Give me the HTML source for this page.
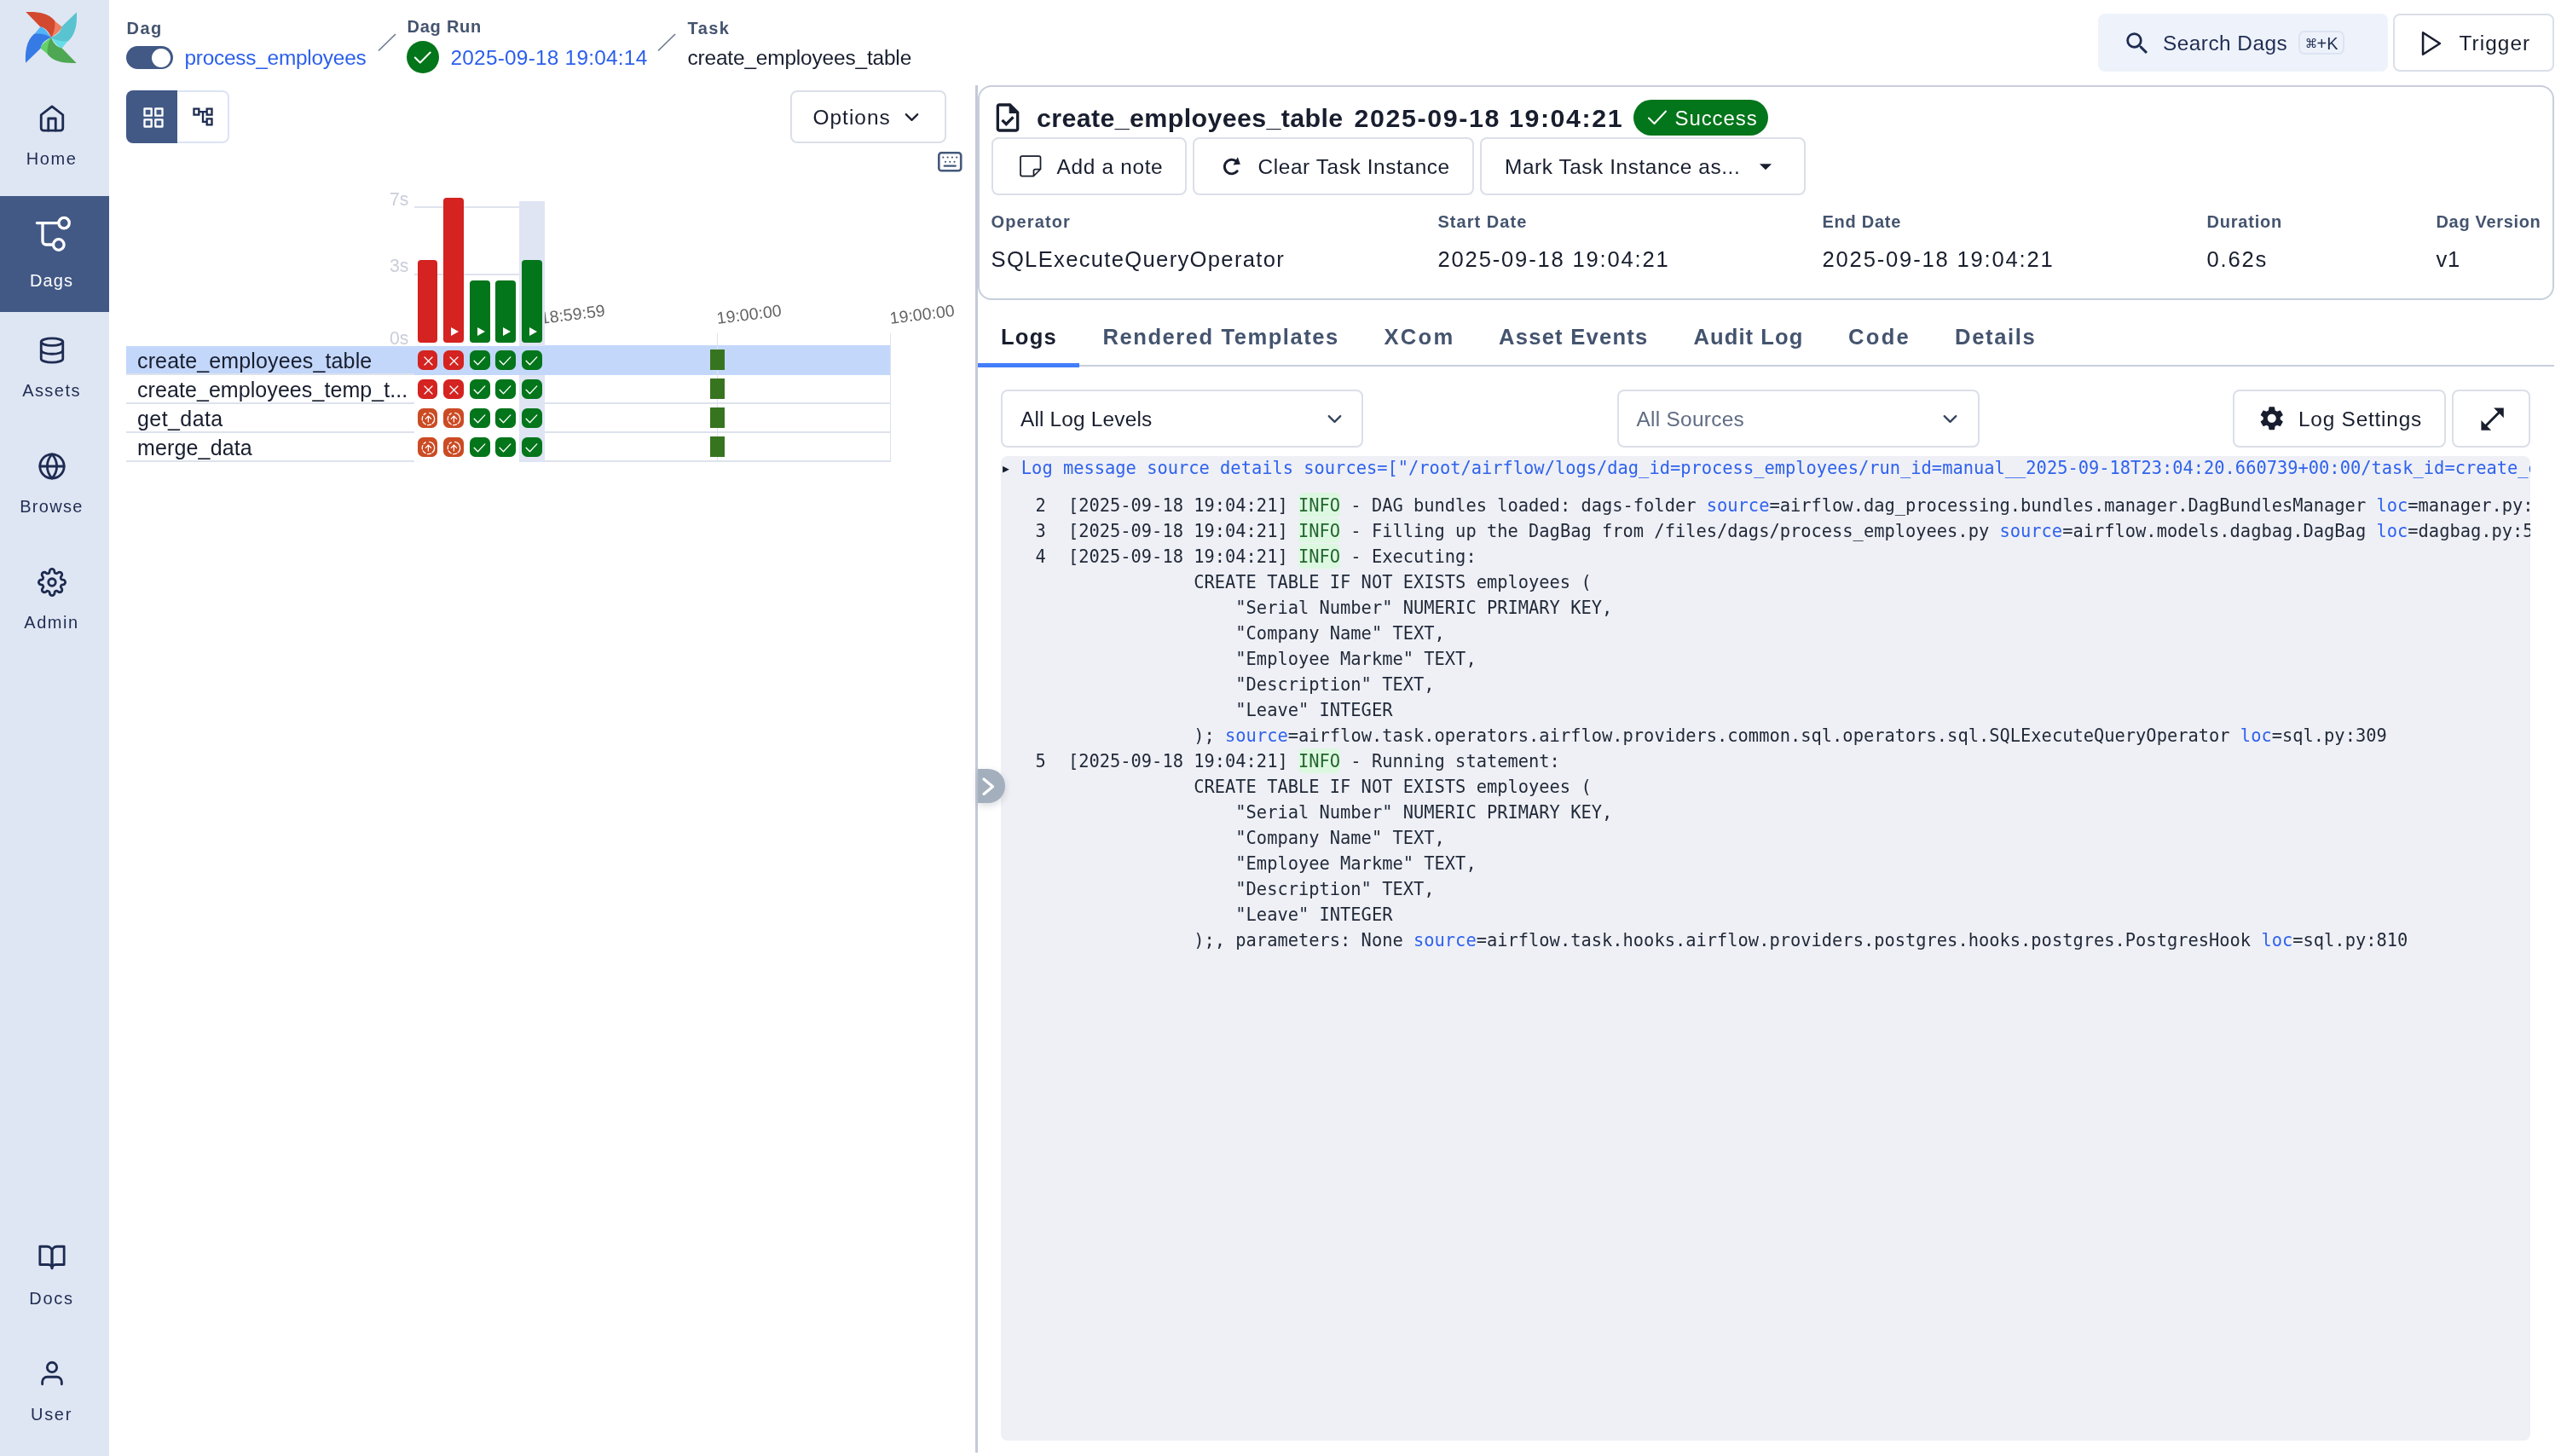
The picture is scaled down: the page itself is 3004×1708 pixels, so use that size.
<!DOCTYPE html>
<html lang="en">
<head>
<meta charset="utf-8">
<title>process_employees - create_employees_table - Airflow</title>
<style>
html,body{margin:0;padding:0;background:#fff}
body{width:3004px;height:1708px;position:relative;overflow:hidden;will-change:transform;font-family:"Liberation Sans", sans-serif;color:#181e2e}
.a{position:absolute;display:block;margin:0;padding:0}
a{text-decoration:none;color:inherit}
.t{position:absolute;display:block;white-space:pre;line-height:1;margin:0;padding:0;font-weight:400}
h2.t{font-weight:700}
svg{display:block;overflow:visible}
.mono{font-family:"DejaVu Sans Mono", "Liberation Mono", monospace;font-size:20.4px;color:#1f2838}
pre.mono{white-space:pre}
.ln{position:absolute;left:0;height:30px;line-height:30px;white-space:pre;width:3000px}
.ln i{position:absolute;left:0;width:52.7px;text-align:right;font-style:normal}
.ln>span{position:absolute;left:78.90px}
.ln b{font-weight:400;color:#2f62ee}
.ln mark{background:#ddf8e1;color:#23662f;border-radius:5px;padding:3px 0 2px}
summary::-webkit-details-marker{display:none}
@media (max-width:1700px){html{zoom:.5}}
</style>
</head>
<body>
<nav class="a" style="left:0;top:0;width:128px;height:1708px;background:#dfe6f3">
<svg class="a" style="left:27.60px;top:12.20px;" width="64.00" height="64.00" viewBox="-32 -32 64 64"><g transform="rotate(0)"><path fill="#ee8061" d="M3-20.6 12.4-12.7C12.6-9 6-4 0 0L-1-3Z"/><path fill="#d2492f" d="M-29.7-29.9C-18-30.6-4-29.5 4-20.1 5.2-15 4-6 0 0-2-5-6-11.6-12.7-12.4Z"/></g><g transform="rotate(90)"><path fill="#66dee8" d="M3-20.6 12.4-12.7C12.6-9 6-4 0 0L-1-3Z"/><path fill="#5ac3d0" d="M-29.7-29.9C-18-30.6-4-29.5 4-20.1 5.2-15 4-6 0 0-2-5-6-11.6-12.7-12.4Z"/></g><g transform="rotate(180)"><path fill="#64d269" d="M3-20.6 12.4-12.7C12.6-9 6-4 0 0L-1-3Z"/><path fill="#4ea853" d="M-29.7-29.9C-18-30.6-4-29.5 4-20.1 5.2-15 4-6 0 0-2-5-6-11.6-12.7-12.4Z"/></g><g transform="rotate(270)"><path fill="#52b4f8" d="M3-20.6 12.4-12.7C12.6-9 6-4 0 0L-1-3Z"/><path fill="#367ae6" d="M-29.7-29.9C-18-30.6-4-29.5 4-20.1 5.2-15 4-6 0 0-2-5-6-11.6-12.7-12.4Z"/></g></svg>
<a class="a" style="left:0.00px;top:94.00px;width:128.00px;height:136.00px;background:transparent;"><svg class="a" style="left:44.00px;top:28.00px;" width="34.00" height="34.00" viewBox="0 0 24 24"><g fill="none" stroke="#1e2c52" stroke-width="2" stroke-linecap="round" stroke-linejoin="round"><path d="M3 9l9-7 9 7v11a2 2 0 0 1-2 2H5a2 2 0 0 1-2-2z"/><polyline points="9 22 9 12 15 12 15 22"/></g></svg><span id="t1" class="t" style="top:81.60px;font-size:20.00px;left:60.50px;transform:translateX(-50%);color:#1e2c52;letter-spacing:1.580px;margin-right:-1.580px;">Home</span></a>
<a class="a" style="left:0.00px;top:230.00px;width:128.00px;height:136.00px;background:#425986;"><svg class="a" style="left:0.00px;top:0.00px;" width="128.00" height="136.00" viewBox="0 0 128 136"><g fill="none" stroke="#fff" stroke-width="3.3" stroke-linecap="round"><path d="M43.4 31.6H67.2M50 31.6V53a4 4 0 0 0 4 4h6.6"/><circle cx="75.1" cy="31.6" r="6.2"/><circle cx="68.8" cy="57" r="6.3"/></g></svg><span id="t2" class="t" style="top:89.00px;font-size:20.00px;left:60.50px;transform:translateX(-50%);color:#ffffff;letter-spacing:1.099px;margin-right:-1.099px;">Dags</span></a>
<a class="a" style="left:0.00px;top:366.00px;width:128.00px;height:136.00px;background:transparent;"><svg class="a" style="left:44.00px;top:28.00px;" width="34.00" height="34.00" viewBox="0 0 24 24"><g fill="none" stroke="#1e2c52" stroke-width="2" stroke-linecap="round" stroke-linejoin="round"><ellipse cx="12" cy="5" rx="9" ry="3"/><path d="M21 12c0 1.66-4 3-9 3s-9-1.34-9-3"/><path d="M3 5v14c0 1.66 4 3 9 3s9-1.34 9-3V5"/></g></svg><span id="t3" class="t" style="top:81.60px;font-size:20.00px;left:60.50px;transform:translateX(-50%);color:#1e2c52;letter-spacing:1.454px;margin-right:-1.454px;">Assets</span></a>
<a class="a" style="left:0.00px;top:502.00px;width:128.00px;height:136.00px;background:transparent;"><svg class="a" style="left:44.00px;top:28.00px;" width="34.00" height="34.00" viewBox="0 0 24 24"><g fill="none" stroke="#1e2c52" stroke-width="2" stroke-linecap="round" stroke-linejoin="round"><circle cx="12" cy="12" r="10"/><line x1="2" y1="12" x2="22" y2="12"/><path d="M12 2a15.3 15.3 0 0 1 4 10 15.3 15.3 0 0 1-4 10 15.3 15.3 0 0 1-4-10 15.3 15.3 0 0 1 4-10z"/></g></svg><span id="t4" class="t" style="top:81.60px;font-size:20.00px;left:60.50px;transform:translateX(-50%);color:#1e2c52;letter-spacing:1.319px;margin-right:-1.319px;">Browse</span></a>
<a class="a" style="left:0.00px;top:638.00px;width:128.00px;height:136.00px;background:transparent;"><svg class="a" style="left:44.00px;top:28.00px;" width="34.00" height="34.00" viewBox="0 0 24 24"><g fill="none" stroke="#1e2c52" stroke-width="2" stroke-linecap="round" stroke-linejoin="round"><circle cx="12" cy="12" r="3"/><path d="M19.4 15a1.65 1.65 0 0 0 .33 1.82l.06.06a2 2 0 0 1 0 2.83 2 2 0 0 1-2.83 0l-.06-.06a1.65 1.65 0 0 0-1.82-.33 1.65 1.65 0 0 0-1 1.51V21a2 2 0 0 1-2 2 2 2 0 0 1-2-2v-.09A1.65 1.65 0 0 0 9 19.4a1.65 1.65 0 0 0-1.82.33l-.06.06a2 2 0 0 1-2.83 0 2 2 0 0 1 0-2.83l.06-.06a1.65 1.65 0 0 0 .33-1.82 1.65 1.65 0 0 0-1.51-1H3a2 2 0 0 1-2-2 2 2 0 0 1 2-2h.09A1.65 1.65 0 0 0 4.6 9a1.65 1.65 0 0 0-.33-1.82l-.06-.06a2 2 0 0 1 0-2.83 2 2 0 0 1 2.83 0l.06.06a1.65 1.65 0 0 0 1.82.33H9a1.65 1.65 0 0 0 1-1.51V3a2 2 0 0 1 2-2 2 2 0 0 1 2 2v.09a1.65 1.65 0 0 0 1 1.51 1.65 1.65 0 0 0 1.82-.33l.06-.06a2 2 0 0 1 2.83 0 2 2 0 0 1 0 2.83l-.06.06a1.65 1.65 0 0 0-.33 1.82V9a1.65 1.65 0 0 0 1.51 1H21a2 2 0 0 1 2 2 2 2 0 0 1-2 2h-.09a1.65 1.65 0 0 0-1.51 1z"/></g></svg><span id="t5" class="t" style="top:81.60px;font-size:20.00px;left:60.50px;transform:translateX(-50%);color:#1e2c52;letter-spacing:1.524px;margin-right:-1.524px;">Admin</span></a>
<a class="a" style="left:0.00px;top:1431.00px;width:128.00px;height:136.00px;background:transparent;"><svg class="a" style="left:44.00px;top:27.00px;" width="34.00" height="34.00" viewBox="0 0 24 24"><g fill="none" stroke="#1e2c52" stroke-width="2" stroke-linecap="round" stroke-linejoin="round"><path d="M2 3h6a4 4 0 0 1 4 4v14a3 3 0 0 0-3-3H2z"/><path d="M22 3h-6a4 4 0 0 0-4 4v14a3 3 0 0 1 3-3h7z"/></g></svg><span id="t6" class="t" style="top:81.60px;font-size:20.00px;left:60.50px;transform:translateX(-50%);color:#1e2c52;letter-spacing:1.774px;margin-right:-1.774px;">Docs</span></a>
<a class="a" style="left:0.00px;top:1567.00px;width:128.00px;height:136.00px;background:transparent;"><svg class="a" style="left:44.00px;top:27.00px;" width="34.00" height="34.00" viewBox="0 0 24 24"><g fill="none" stroke="#1e2c52" stroke-width="2" stroke-linecap="round" stroke-linejoin="round"><path d="M20 21v-2a4 4 0 0 0-4-4H8a4 4 0 0 0-4 4v2"/><circle cx="12" cy="7" r="4"/></g></svg><span id="t7" class="t" style="top:81.60px;font-size:20.00px;left:60.50px;transform:translateX(-50%);color:#1e2c52;letter-spacing:1.689px;margin-right:-1.689px;">User</span></a>
</nav>
<header class="a" style="left:128px;top:0;width:2876px;height:100px">
</header>
<span id="t8" class="t" style="top:23.00px;font-size:20.00px;left:148.50px;color:#44546f;font-weight:700;letter-spacing:1.502px;margin-right:-1.502px;">Dag</span>
<div class="a" style="left:148.00px;top:54.00px;width:55.00px;height:27.00px;background:#425986;border-radius:14px;"><i class="a" style="left:29.8px;top:2.5px;width:22px;height:22px;border-radius:50%;background:#fff"></i></div>
<a id="t9" class="t" style="top:55.70px;font-size:24.40px;left:216.50px;color:#2b5fec;letter-spacing:-0.233px;margin-right:0.233px;">process_employees</a>
<svg class="a" style="left:442.50px;top:38.50px;" width="22.00" height="21.50" viewBox="0 0 22 21.5"><path d="M1 20.5 21 1" stroke="#6a788c" stroke-width="1.6" fill="none"/></svg>
<span id="t10" class="t" style="top:21.00px;font-size:20.00px;left:477.50px;color:#44546f;font-weight:700;letter-spacing:0.764px;margin-right:-0.764px;">Dag Run</span>
<svg class="a" style="left:477.00px;top:48.00px;" width="38.00" height="38.00" viewBox="0 0 38 38"><circle cx="19" cy="19" r="19" fill="#03751a"/><polyline points="9.8 19.5 15.85 25.5 27.7 13.5" fill="none" stroke="#fff" stroke-width="2" stroke-linecap="round" stroke-linejoin="round"/></svg>
<a id="t11" class="t" style="top:55.70px;font-size:24.40px;left:528.50px;color:#2b5fec;letter-spacing:0.234px;margin-right:-0.234px;">2025-09-18 19:04:14</a>
<svg class="a" style="left:770.50px;top:38.50px;" width="22.00" height="21.50" viewBox="0 0 22 21.5"><path d="M1 20.5 21 1" stroke="#6a788c" stroke-width="1.6" fill="none"/></svg>
<span id="t12" class="t" style="top:23.00px;font-size:20.00px;left:806.50px;color:#44546f;font-weight:700;letter-spacing:1.397px;margin-right:-1.397px;">Task</span>
<span id="t13" class="t" style="top:55.70px;font-size:24.40px;left:806.50px;color:#181e2e;letter-spacing:-0.146px;margin-right:0.146px;">create_employees_table</span>
<div class="a" style="left:2461.00px;top:16.00px;width:340.00px;height:68.00px;background:#eef2fa;border-radius:8px;"></div>
<svg class="a" style="left:2490.00px;top:34.00px;" width="34.00" height="34.00" viewBox="0 0 24 24"><path fill="#1e2c52" d="M15.5 14h-.79l-.28-.27A6.471 6.471 0 0 0 16 9.5 6.5 6.5 0 1 0 9.5 16c1.61 0 3.09-.59 4.23-1.57l.27.28v.79l5 4.99L20.49 19l-4.99-5zm-6 0C7.01 14 5 11.99 5 9.5S7.01 5 9.5 5 14 7.01 14 9.5 11.99 14 9.5 14z"/></svg>
<span id="t14" class="t" style="top:39.00px;font-size:24.40px;left:2537.00px;color:#1e2c52;letter-spacing:0.470px;margin-right:-0.470px;">Search Dags</span>
<div class="a" style="left:2696.00px;top:36.00px;width:53.50px;height:28.00px;box-sizing:border-box;border:2px solid #dce4f3;border-radius:7px;background:#edf1fa;"></div>
<span id="t15" class="t" style="top:40.50px;font-size:20.00px;left:2703.80px;color:#1e2c52;"><span style="font-family:'DejaVu Sans',sans-serif;font-size:14.6px;position:relative;top:-1.5px;margin-right:-0.8px">⌘</span>+K</span>
<div class="a" style="left:2807.00px;top:16.00px;width:189.00px;height:68.00px;box-sizing:border-box;border:2px solid #dadfe8;border-radius:8px;"></div>
<svg class="a" style="left:2834.50px;top:34.00px;" width="34.00" height="34.00" viewBox="0 0 24 24"><g fill="none" stroke="#181e2e" stroke-width="1.8" stroke-linecap="round" stroke-linejoin="round"><polygon points="5 3 19 12 5 21 5 3"/></g></svg>
<span id="t16" class="t" style="top:39.00px;font-size:24.40px;left:2884.50px;color:#181e2e;letter-spacing:1.056px;margin-right:-1.056px;">Trigger</span>
<div class="a" style="left:148.00px;top:106.00px;width:60.00px;height:62.00px;background:#425986;border-radius:8px 0 0 8px;"></div>
<svg class="a" style="left:165.60px;top:123.50px;" width="28.00" height="28.00" viewBox="0 0 24 24"><g fill="none" stroke="#fff" stroke-width="2" stroke-linecap="round" stroke-linejoin="round"><rect x="3" y="3" width="7" height="7"/><rect x="14" y="3" width="7" height="7"/><rect x="14" y="14" width="7" height="7"/><rect x="3" y="14" width="7" height="7"/></g></svg>
<div class="a" style="left:208.00px;top:106.00px;width:61.00px;height:62.00px;box-sizing:border-box;border:2px solid #dbe4f4;border-left:0;border-radius:0 8px 8px 0;"></div>
<svg class="a" style="left:223.50px;top:123.40px;" width="28.00" height="28.00" viewBox="0 0 24 24"><path fill="#1e2c52" d="M22 11V3h-7v3H9V3H2v8h7V8h2v10h4v3h7v-8h-7v3h-2V8h2v3h7zM7 9H4V5h3v4zm10 6h3v4h-3v-4zm0-10h3v4h-3V5z"/></svg>
<div class="a" style="left:927.00px;top:106.00px;width:183.00px;height:62.00px;box-sizing:border-box;border:2px solid #dadfe8;border-radius:8px;"></div>
<span id="t17" class="t" style="top:125.80px;font-size:24.40px;left:953.50px;color:#181e2e;letter-spacing:1.022px;margin-right:-1.022px;">Options</span>
<svg class="a" style="left:1056.25px;top:123.90px;" width="27.00" height="27.00" viewBox="0 0 24 24"><g fill="none" stroke="#181e2e" stroke-width="1.9" stroke-linecap="round" stroke-linejoin="round"><polyline points="6 9 12 15 18 9"/></g></svg>
<svg class="a" style="left:1099.50px;top:178.00px;" width="28.50" height="23.50" viewBox="0 0 28.5 23.5"><rect x="1.3" y="1.3" width="25.9" height="20.9" rx="3" fill="none" stroke="#44597b" stroke-width="2.6"/><g fill="#44597b"><circle cx="6.3" cy="6.6" r="1.1"/><circle cx="11.6" cy="6.6" r="1.1"/><circle cx="16.9" cy="6.6" r="1.1"/><circle cx="22.2" cy="6.6" r="1.1"/><circle cx="9" cy="11.8" r="1.1"/><circle cx="14.25" cy="11.8" r="1.1"/><circle cx="19.5" cy="11.8" r="1.1"/><rect x="6.6" y="15.6" width="15.3" height="2.2" rx="1.1"/></g></svg>
<span id="t18" class="t" style="top:222.90px;font-size:21.20px;left:479.30px;transform:translateX(-100%);color:#c9ceda;">7s</span>
<span id="t19" class="t" style="top:300.60px;font-size:21.20px;left:479.30px;transform:translateX(-100%);color:#c9ceda;">3s</span>
<span id="t20" class="t" style="top:385.60px;font-size:21.20px;left:479.30px;transform:translateX(-100%);color:#c9ceda;">0s</span>
<div class="a" style="left:486.00px;top:241.50px;width:123.00px;height:2.00px;background:#dfe3ed;"></div>
<div class="a" style="left:486.00px;top:320.50px;width:123.00px;height:2.00px;background:#dfe3ed;"></div>
<div class="a" style="left:609.00px;top:236.00px;width:30.00px;height:305.50px;background:#dfe5f3;"></div>
<div class="a" style="left:490.00px;top:305.00px;width:23.00px;height:97.00px;background:#d42320;border-radius:4px;"></div>
<div class="a" style="left:520.00px;top:232.00px;width:24.00px;height:170.00px;background:#d42320;border-radius:4px;"><svg class="a" style="left:8.5px;bottom:8px" width="9" height="10" viewBox="0 0 9 10"><path fill="#fff" d="M0 0 9 5 0 10Z"/></svg></div>
<div class="a" style="left:551.00px;top:329.00px;width:24.00px;height:73.00px;background:#03751a;border-radius:4px;"><svg class="a" style="left:8.5px;bottom:8px" width="9" height="10" viewBox="0 0 9 10"><path fill="#fff" d="M0 0 9 5 0 10Z"/></svg></div>
<div class="a" style="left:581.00px;top:329.00px;width:24.00px;height:73.00px;background:#03751a;border-radius:4px;"><svg class="a" style="left:8.5px;bottom:8px" width="9" height="10" viewBox="0 0 9 10"><path fill="#fff" d="M0 0 9 5 0 10Z"/></svg></div>
<div class="a" style="left:612.00px;top:305.00px;width:24.00px;height:97.00px;background:#03751a;border-radius:4px;"><svg class="a" style="left:8.5px;bottom:8px" width="9" height="10" viewBox="0 0 9 10"><path fill="#fff" d="M0 0 9 5 0 10Z"/></svg></div>
<div class="a" style="left:148.00px;top:406.00px;width:338.00px;height:32.00px;background:#c3d7fb;"></div>
<div class="a" style="left:486.00px;top:406.00px;width:153.00px;height:34.00px;background:#c3d7fb;"></div>
<div class="a" style="left:639.00px;top:405.00px;width:406.00px;height:35.00px;background:#c3d7fb;"></div>
<div class="a" style="left:148.00px;top:438.00px;width:338.00px;height:2.00px;background:#dde2ec;"></div>
<div class="a" style="left:148.00px;top:472.00px;width:338.00px;height:2.00px;background:#dde2ec;"></div>
<div class="a" style="left:639.00px;top:472.00px;width:406.00px;height:2.00px;background:#dde2ec;"></div>
<div class="a" style="left:148.00px;top:506.00px;width:338.00px;height:2.00px;background:#dde2ec;"></div>
<div class="a" style="left:639.00px;top:506.00px;width:406.00px;height:2.00px;background:#dde2ec;"></div>
<div class="a" style="left:148.00px;top:540.00px;width:338.00px;height:2.00px;background:#dde2ec;"></div>
<div class="a" style="left:639.00px;top:540.00px;width:406.00px;height:2.00px;background:#dde2ec;"></div>
<div class="a" style="left:840.80px;top:391.00px;width:1.60px;height:150.00px;background:#dde2ec;"></div>
<div class="a" style="left:1043.80px;top:391.00px;width:1.60px;height:150.00px;background:#dde2ec;"></div>
<svg width="0" height="0" style="position:absolute"><defs><symbol id="i-x" viewBox="0 0 24 24"><path d="M8 8 17 17M17 8 8 17" stroke="#fff" stroke-width="1.3" stroke-linecap="round" fill="none"/></symbol><symbol id="i-ok" viewBox="0 0 24 24"><polyline points="5.15 12.3 9.5 16.7 17.8 7.9" stroke="#fff" stroke-width="1.35" stroke-linecap="round" stroke-linejoin="round" fill="none"/></symbol><symbol id="i-up" viewBox="0 0 24 24"><g stroke="#fff" stroke-width="1.25" fill="none" stroke-linecap="round"><path d="M13.65 5.31A7.2 7.2 0 0 1 17.03 17.92"/><path d="M15.6 18.85A7.2 7.2 0 0 1 9.3 5.9" stroke-dasharray="4.2 2.3"/><path d="M12.4 15.9V9.2M9.2 12.4 12.4 9.1 15.6 12.4"/></g></symbol></defs></svg>
<span id="t21" class="t" style="top:410.50px;font-size:25.00px;left:161.00px;color:#181e2e;letter-spacing:0.135px;margin-right:-0.135px;">create_employees_table</span>
<div class="a" style="left:490.00px;top:411.00px;width:23.00px;height:23.00px;background:#d42320;border-radius:6.5px;"><svg width="24" height="24"><use href="#i-x" width="24" height="24"/></svg></div>
<div class="a" style="left:520.00px;top:411.00px;width:24.00px;height:23.00px;background:#d42320;border-radius:6.5px;"><svg width="24" height="24"><use href="#i-x" width="24" height="24"/></svg></div>
<div class="a" style="left:551.00px;top:411.00px;width:24.00px;height:23.00px;background:#03751a;border-radius:6.5px;"><svg width="24" height="24"><use href="#i-ok" width="24" height="24"/></svg></div>
<div class="a" style="left:581.00px;top:411.00px;width:24.00px;height:23.00px;background:#03751a;border-radius:6.5px;"><svg width="24" height="24"><use href="#i-ok" width="24" height="24"/></svg></div>
<div class="a" style="left:612.00px;top:411.00px;width:24.00px;height:23.00px;background:#03751a;border-radius:6.5px;"><svg width="24" height="24"><use href="#i-ok" width="24" height="24"/></svg></div>
<div class="a" style="left:833.00px;top:409.80px;width:17.00px;height:24.40px;background:#37741f;"></div>
<span id="t22" class="t" style="top:444.50px;font-size:25.00px;left:161.00px;color:#181e2e;letter-spacing:0.071px;margin-right:-0.071px;">create_employees_temp_t...</span>
<div class="a" style="left:490.00px;top:445.00px;width:23.00px;height:23.00px;background:#d42320;border-radius:6.5px;"><svg width="24" height="24"><use href="#i-x" width="24" height="24"/></svg></div>
<div class="a" style="left:520.00px;top:445.00px;width:24.00px;height:23.00px;background:#d42320;border-radius:6.5px;"><svg width="24" height="24"><use href="#i-x" width="24" height="24"/></svg></div>
<div class="a" style="left:551.00px;top:445.00px;width:24.00px;height:23.00px;background:#03751a;border-radius:6.5px;"><svg width="24" height="24"><use href="#i-ok" width="24" height="24"/></svg></div>
<div class="a" style="left:581.00px;top:445.00px;width:24.00px;height:23.00px;background:#03751a;border-radius:6.5px;"><svg width="24" height="24"><use href="#i-ok" width="24" height="24"/></svg></div>
<div class="a" style="left:612.00px;top:445.00px;width:24.00px;height:23.00px;background:#03751a;border-radius:6.5px;"><svg width="24" height="24"><use href="#i-ok" width="24" height="24"/></svg></div>
<div class="a" style="left:833.00px;top:443.80px;width:17.00px;height:24.40px;background:#37741f;"></div>
<span id="t23" class="t" style="top:478.50px;font-size:25.00px;left:161.00px;color:#181e2e;letter-spacing:0.417px;margin-right:-0.417px;">get_data</span>
<div class="a" style="left:490.00px;top:479.00px;width:23.00px;height:23.00px;background:#cb4b23;border-radius:6.5px;"><svg width="24" height="24"><use href="#i-up" width="24" height="24"/></svg></div>
<div class="a" style="left:520.00px;top:479.00px;width:24.00px;height:23.00px;background:#cb4b23;border-radius:6.5px;"><svg width="24" height="24"><use href="#i-up" width="24" height="24"/></svg></div>
<div class="a" style="left:551.00px;top:479.00px;width:24.00px;height:23.00px;background:#03751a;border-radius:6.5px;"><svg width="24" height="24"><use href="#i-ok" width="24" height="24"/></svg></div>
<div class="a" style="left:581.00px;top:479.00px;width:24.00px;height:23.00px;background:#03751a;border-radius:6.5px;"><svg width="24" height="24"><use href="#i-ok" width="24" height="24"/></svg></div>
<div class="a" style="left:612.00px;top:479.00px;width:24.00px;height:23.00px;background:#03751a;border-radius:6.5px;"><svg width="24" height="24"><use href="#i-ok" width="24" height="24"/></svg></div>
<div class="a" style="left:833.00px;top:477.80px;width:17.00px;height:24.40px;background:#37741f;"></div>
<span id="t24" class="t" style="top:512.50px;font-size:25.00px;left:161.00px;color:#181e2e;letter-spacing:0.146px;margin-right:-0.146px;">merge_data</span>
<div class="a" style="left:490.00px;top:513.00px;width:23.00px;height:23.00px;background:#cb4b23;border-radius:6.5px;"><svg width="24" height="24"><use href="#i-up" width="24" height="24"/></svg></div>
<div class="a" style="left:520.00px;top:513.00px;width:24.00px;height:23.00px;background:#cb4b23;border-radius:6.5px;"><svg width="24" height="24"><use href="#i-up" width="24" height="24"/></svg></div>
<div class="a" style="left:551.00px;top:513.00px;width:24.00px;height:23.00px;background:#03751a;border-radius:6.5px;"><svg width="24" height="24"><use href="#i-ok" width="24" height="24"/></svg></div>
<div class="a" style="left:581.00px;top:513.00px;width:24.00px;height:23.00px;background:#03751a;border-radius:6.5px;"><svg width="24" height="24"><use href="#i-ok" width="24" height="24"/></svg></div>
<div class="a" style="left:612.00px;top:513.00px;width:24.00px;height:23.00px;background:#03751a;border-radius:6.5px;"><svg width="24" height="24"><use href="#i-ok" width="24" height="24"/></svg></div>
<div class="a" style="left:833.00px;top:511.80px;width:17.00px;height:24.40px;background:#37741f;"></div>
<div class="a" style="left:639.00px;top:340.00px;width:420.00px;height:62.00px;overflow:hidden;"><span id="t25" class="t" style="top:24.21px;font-size:19.60px;left:-3.90px;color:#666;transform-origin:0 100%;transform:rotate(-7deg);">18:59:59</span></div>
<span id="t26" class="t" style="top:363.91px;font-size:19.60px;left:842.00px;color:#666;transform-origin:0 100%;transform:rotate(-7deg);">19:00:00</span>
<span id="t27" class="t" style="top:363.91px;font-size:19.60px;left:1045.30px;color:#666;transform-origin:0 100%;transform:rotate(-7deg);">19:00:00</span>
<div class="a" style="left:1144.00px;top:100.00px;width:3.00px;height:1604.00px;background:#c4cad7;"></div>
<div class="a" style="left:1147.00px;top:902.00px;width:32.00px;height:40.00px;z-index:5;background:#a4afbd;border-radius:0 20px 20px 0;box-shadow:0 3px 8px rgba(40,50,70,.18);"><svg width="32" height="40"><polyline points="7 12 17.5 20.7 7 29.4" fill="none" stroke="#fff" stroke-width="3.2" stroke-linecap="round" stroke-linejoin="round"/></svg></div>
<section class="a" style="left:1147.00px;top:100.00px;width:1849.00px;height:252.00px;box-sizing:border-box;border:2px solid #c8cedb;border-radius:16px;"></section>
<svg class="a" style="left:1162.00px;top:118.00px;" width="40.00" height="40.00" viewBox="0 0 24 24"><path fill="#181e2e" d="M14 2H6c-1.1 0-1.99.9-1.99 2L4 20c0 1.1.89 2 1.99 2H18c1.1 0 2-.9 2-2V8l-6-6zm4 18H6V4h7v5h5v11zM8.82 13.05 7.4 14.46 10.94 18l5.66-5.66-1.41-1.41-4.24 4.24-2.13-2.12z"/></svg>
<h2 id="t28" class="t" style="top:123.00px;font-size:30.40px;left:1216.00px;color:#181e2e;font-weight:700;letter-spacing:0.373px;margin-right:-0.373px;">create_employees_table</h2>
<span id="t29" class="t" style="top:123.00px;font-size:30.40px;left:1588.50px;color:#181e2e;font-weight:700;letter-spacing:1.593px;margin-right:-1.593px;">2025-09-18 19:04:21</span>
<div class="a" style="left:1916.00px;top:117.00px;width:158.00px;height:42.00px;background:#03751a;border-radius:21px;"><svg width="158" height="42"><polyline points="18 21.5 24.5 28 38 13.5" fill="none" stroke="#fff" stroke-width="2" stroke-linecap="round" stroke-linejoin="round"/></svg></div>
<span id="t30" class="t" style="top:127.00px;font-size:24.00px;left:1964.50px;color:#fff;letter-spacing:0.909px;margin-right:-0.909px;">Success</span>
<div class="a" style="left:1163.00px;top:161.00px;width:229.00px;height:68.00px;box-sizing:border-box;border:2px solid #dadfe8;border-radius:8px;"></div>
<svg class="a" style="left:1196.00px;top:182.00px;" width="25.50" height="25.50" viewBox="0 0 25.5 25.5"><path d="M1 3a2 2 0 0 1 2-2h19.5a2 2 0 0 1 2 2v13.5l-8 8H3a2 2 0 0 1-2-2zM24.5 16.5h-6a2 2 0 0 0-2 2v6" fill="none" stroke="#181e2e" stroke-width="1.75" stroke-linejoin="round"/></svg>
<span id="t31" class="t" style="top:184.00px;font-size:24.40px;left:1239.50px;color:#181e2e;letter-spacing:0.688px;margin-right:-0.688px;">Add a note</span>
<div class="a" style="left:1399.00px;top:161.00px;width:330.00px;height:68.00px;box-sizing:border-box;border:2px solid #dadfe8;border-radius:8px;"></div>
<svg class="a" style="left:1430.00px;top:180.00px;" width="30.00" height="30.00" viewBox="0 0 30 30"><path d="M21.24 10.49A8.3 8.3 0 1 0 21.24 20.71" fill="none" stroke="#181e2e" stroke-width="2.9" stroke-linecap="round"/><path d="M21.8 4.3 24.9 12.7 16.5 13.5Z" fill="#181e2e"/></svg>
<span id="t32" class="t" style="top:184.00px;font-size:24.40px;left:1475.50px;color:#181e2e;letter-spacing:0.607px;margin-right:-0.607px;">Clear Task Instance</span>
<div class="a" style="left:1736.00px;top:161.00px;width:382.00px;height:68.00px;box-sizing:border-box;border:2px solid #dadfe8;border-radius:8px;"></div>
<span id="t33" class="t" style="top:184.00px;font-size:24.40px;left:1765.00px;color:#181e2e;letter-spacing:0.572px;margin-right:-0.572px;">Mark Task Instance as...</span>
<svg class="a" style="left:2054.00px;top:177.80px;" width="34.00" height="34.00" viewBox="0 0 24 24"><path fill="#181e2e" d="M7 10l5 5 5-5z"/></svg>
<span id="t34" class="t" style="top:250.00px;font-size:20.00px;left:1162.50px;color:#44546f;font-weight:700;letter-spacing:1.119px;margin-right:-1.119px;">Operator</span>
<span id="t35" class="t" style="top:292.00px;font-size:25.60px;left:1162.50px;color:#181e2e;letter-spacing:1.314px;margin-right:-1.314px;">SQLExecuteQueryOperator</span>
<span id="t36" class="t" style="top:250.00px;font-size:20.00px;left:1686.50px;color:#44546f;font-weight:700;letter-spacing:1.035px;margin-right:-1.035px;">Start Date</span>
<span id="t37" class="t" style="top:292.00px;font-size:25.60px;left:1686.50px;color:#181e2e;letter-spacing:1.814px;margin-right:-1.814px;">2025-09-18 19:04:21</span>
<span id="t38" class="t" style="top:250.00px;font-size:20.00px;left:2137.50px;color:#44546f;font-weight:700;letter-spacing:0.730px;margin-right:-0.730px;">End Date</span>
<span id="t39" class="t" style="top:292.00px;font-size:25.60px;left:2137.50px;color:#181e2e;letter-spacing:1.814px;margin-right:-1.814px;">2025-09-18 19:04:21</span>
<span id="t40" class="t" style="top:250.00px;font-size:20.00px;left:2588.50px;color:#44546f;font-weight:700;letter-spacing:0.797px;margin-right:-0.797px;">Duration</span>
<span id="t41" class="t" style="top:292.00px;font-size:25.60px;left:2588.50px;color:#181e2e;letter-spacing:1.795px;margin-right:-1.795px;">0.62s</span>
<span id="t42" class="t" style="top:250.00px;font-size:20.00px;left:2857.50px;color:#44546f;font-weight:700;letter-spacing:0.669px;margin-right:-0.669px;">Dag Version</span>
<span id="t43" class="t" style="top:292.00px;font-size:25.60px;left:2857.50px;color:#181e2e;letter-spacing:0.773px;margin-right:-0.773px;">v1</span>
<span id="t44" class="t" style="top:382.50px;font-size:25.60px;left:1174.00px;color:#181e2e;font-weight:700;letter-spacing:1.221px;margin-right:-1.221px;">Logs</span>
<span id="t45" class="t" style="top:382.50px;font-size:25.60px;left:1293.50px;color:#44546f;font-weight:700;letter-spacing:1.526px;margin-right:-1.526px;">Rendered Templates</span>
<span id="t46" class="t" style="top:382.50px;font-size:25.60px;left:1623.50px;color:#44546f;font-weight:700;letter-spacing:2.284px;margin-right:-2.284px;">XCom</span>
<span id="t47" class="t" style="top:382.50px;font-size:25.60px;left:1758.00px;color:#44546f;font-weight:700;letter-spacing:1.232px;margin-right:-1.232px;">Asset Events</span>
<span id="t48" class="t" style="top:382.50px;font-size:25.60px;left:1986.50px;color:#44546f;font-weight:700;letter-spacing:1.050px;margin-right:-1.050px;">Audit Log</span>
<span id="t49" class="t" style="top:382.50px;font-size:25.60px;left:2168.00px;color:#44546f;font-weight:700;letter-spacing:2.273px;margin-right:-2.273px;">Code</span>
<span id="t50" class="t" style="top:382.50px;font-size:25.60px;left:2293.00px;color:#44546f;font-weight:700;letter-spacing:1.644px;margin-right:-1.644px;">Details</span>
<div class="a" style="left:1147.00px;top:428.00px;width:1849.00px;height:2.00px;background:#c8cedb;"></div>
<div class="a" style="left:1147.00px;top:426.00px;width:119.00px;height:4.50px;background:#427dfa;"></div>
<div class="a" style="left:1174.00px;top:457.00px;width:425.00px;height:68.00px;box-sizing:border-box;border:2px solid #dadfe8;border-radius:8px;"></div>
<span id="t51" class="t" style="top:479.50px;font-size:24.40px;left:1197.00px;color:#181e2e;letter-spacing:0.180px;margin-right:-0.180px;">All Log Levels</span>
<svg class="a" style="left:1552.25px;top:478.00px;" width="27.00" height="27.00" viewBox="0 0 24 24"><g fill="none" stroke="#34435c" stroke-width="2" stroke-linecap="round" stroke-linejoin="round"><polyline points="6 9 12 15 18 9"/></g></svg>
<div class="a" style="left:1897.00px;top:457.00px;width:425.00px;height:68.00px;box-sizing:border-box;border:2px solid #dadfe8;border-radius:8px;"></div>
<span id="t52" class="t" style="top:479.50px;font-size:24.40px;left:1919.50px;color:#5f6c83;letter-spacing:0.284px;margin-right:-0.284px;">All Sources</span>
<svg class="a" style="left:2274.00px;top:478.00px;" width="27.00" height="27.00" viewBox="0 0 24 24"><g fill="none" stroke="#34435c" stroke-width="2" stroke-linecap="round" stroke-linejoin="round"><polyline points="6 9 12 15 18 9"/></g></svg>
<div class="a" style="left:2619.00px;top:457.00px;width:250.00px;height:68.00px;box-sizing:border-box;border:2px solid #dadfe8;border-radius:8px;"></div>
<svg class="a" style="left:2648.30px;top:474.20px;" width="33.50" height="33.50" viewBox="0 0 24 24"><path fill="#181e2e" d="M19.14 12.94c.04-.3.06-.61.06-.94 0-.32-.02-.64-.07-.94l2.03-1.58a.49.49 0 0 0 .12-.61l-1.92-3.32a.488.488 0 0 0-.59-.22l-2.39.96c-.5-.38-1.03-.7-1.62-.94l-.36-2.54a.484.484 0 0 0-.48-.41h-3.84c-.24 0-.43.17-.47.41l-.36 2.54c-.59.24-1.13.57-1.62.94l-2.39-.96c-.22-.08-.47 0-.59.22L2.74 8.87c-.12.21-.08.47.12.61l2.03 1.58c-.05.3-.09.63-.09.94s.02.64.07.94l-2.03 1.58a.49.49 0 0 0-.12.61l1.92 3.32c.12.22.37.29.59.22l2.39-.96c.5.38 1.03.7 1.62.94l.36 2.54c.05.24.24.41.48.41h3.84c.24 0 .44-.17.47-.41l.36-2.54c.59-.24 1.13-.56 1.62-.94l2.39.96c.22.08.47 0 .59-.22l1.92-3.32c.12-.22.07-.47-.12-.61l-2.01-1.58zM12 15.6c-1.98 0-3.6-1.62-3.6-3.6s1.62-3.6 3.6-3.6 3.6 1.62 3.6 3.6-1.62 3.6-3.6 3.6z"/></svg>
<span id="t53" class="t" style="top:480.00px;font-size:24.40px;left:2696.00px;color:#181e2e;letter-spacing:0.781px;margin-right:-0.781px;">Log Settings</span>
<div class="a" style="left:2876.00px;top:457.00px;width:92.00px;height:68.00px;box-sizing:border-box;border:2px solid #dadfe8;border-radius:8px;"></div>
<svg class="a" style="left:2905.60px;top:473.60px;" width="35.20" height="35.20" viewBox="0 0 24 24"><path fill="#181e2e" d="M21 11V3h-8l3.29 3.29-10 10L3 13v8h8l-3.29-3.29 10-10z"/></svg>
<pre class="a mono" style="left:1174.00px;top:535.00px;width:1794.00px;height:1155.00px;background:#eff0f5;border-radius:8px;overflow:hidden;"><details class="a" style="left:0;top:0;width:1794px;height:40px"><summary class="t mono" style="left:2px;top:4.23px;color:#2f62ee;list-style:none"><span style="color:#181e2e;font-size:13px;position:relative;top:-2px;margin-right:14px">▶</span>Log message source details sources=["/root/airflow/logs/dag_id=process_employees/run_id=manual__2025-09-18T23:04:20.660739+00:00/task_id=create_employees_table/attempt=1.log"]</summary></details><div class="ln" style="top:43.00px"><i>2</i><span>[2025-09-18 19:04:21] <mark>INFO</mark> - DAG bundles loaded: dags-folder <b>source</b>=airflow.dag_processing.bundles.manager.DagBundlesManager <b>loc</b>=manager.py:97</span></div><div class="ln" style="top:73.00px"><i>3</i><span>[2025-09-18 19:04:21] <mark>INFO</mark> - Filling up the DagBag from /files/dags/process_employees.py <b>source</b>=airflow.models.dagbag.DagBag <b>loc</b>=dagbag.py:593</span></div><div class="ln" style="top:103.00px"><i>4</i><span>[2025-09-18 19:04:21] <mark>INFO</mark> - Executing:</span></div><div class="ln" style="top:133.00px"><span>            CREATE TABLE IF NOT EXISTS employees (</span></div><div class="ln" style="top:163.00px"><span>                "Serial Number" NUMERIC PRIMARY KEY,</span></div><div class="ln" style="top:193.00px"><span>                "Company Name" TEXT,</span></div><div class="ln" style="top:223.00px"><span>                "Employee Markme" TEXT,</span></div><div class="ln" style="top:253.00px"><span>                "Description" TEXT,</span></div><div class="ln" style="top:283.00px"><span>                "Leave" INTEGER</span></div><div class="ln" style="top:313.00px"><span>            ); <b>source</b>=airflow.task.operators.airflow.providers.common.sql.operators.sql.SQLExecuteQueryOperator <b>loc</b>=sql.py:309</span></div><div class="ln" style="top:343.00px"><i>5</i><span>[2025-09-18 19:04:21] <mark>INFO</mark> - Running statement:</span></div><div class="ln" style="top:373.00px"><span>            CREATE TABLE IF NOT EXISTS employees (</span></div><div class="ln" style="top:403.00px"><span>                "Serial Number" NUMERIC PRIMARY KEY,</span></div><div class="ln" style="top:433.00px"><span>                "Company Name" TEXT,</span></div><div class="ln" style="top:463.00px"><span>                "Employee Markme" TEXT,</span></div><div class="ln" style="top:493.00px"><span>                "Description" TEXT,</span></div><div class="ln" style="top:523.00px"><span>                "Leave" INTEGER</span></div><div class="ln" style="top:553.00px"><span>            );, parameters: None <b>source</b>=airflow.task.hooks.airflow.providers.postgres.hooks.postgres.PostgresHook <b>loc</b>=sql.py:810</span></div></pre>
</body>
</html>
